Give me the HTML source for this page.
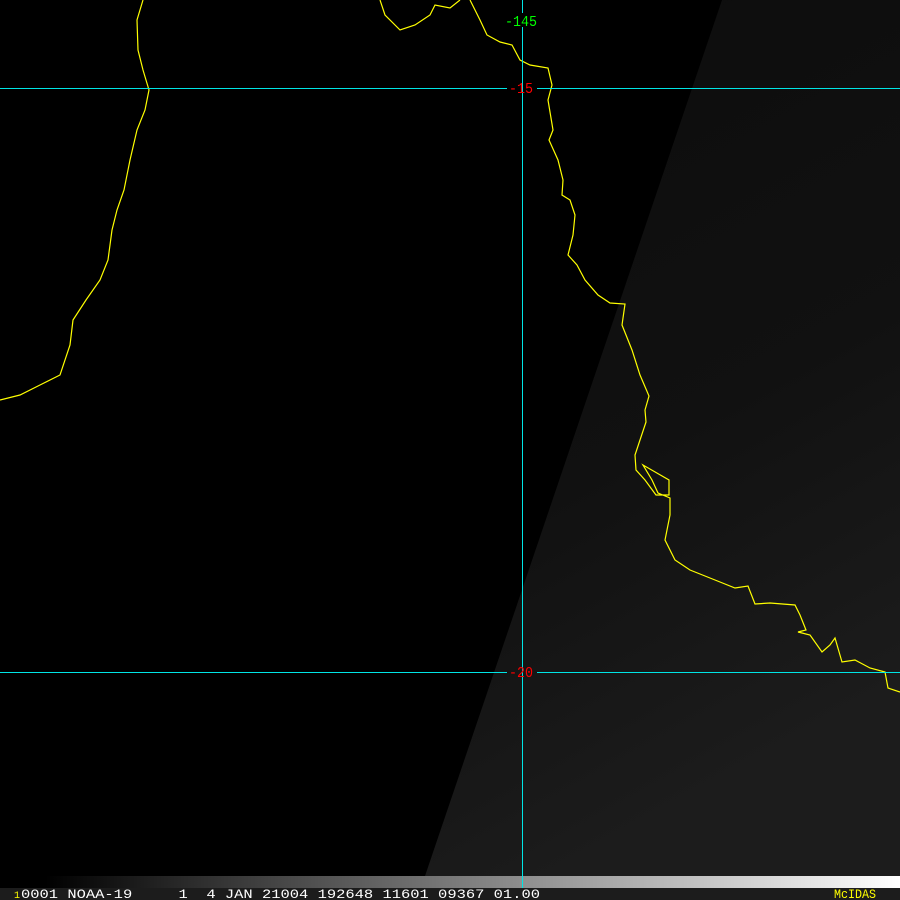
<!DOCTYPE html>
<html><head><style>
html,body{margin:0;padding:0;background:#000;width:900px;height:900px;overflow:hidden}
svg{display:block}
text{white-space:pre}
</style></head><body>
<svg width="900" height="900" viewBox="0 0 900 900" xmlns="http://www.w3.org/2000/svg">
<defs>
<linearGradient id="sw" x1="0" y1="0" x2="0.3" y2="1">
<stop offset="0" stop-color="#0c0c0c"/>
<stop offset="0.6" stop-color="#111"/>
<stop offset="1" stop-color="#1c1c1c"/>
</linearGradient>
<linearGradient id="bar" x1="0" y1="0" x2="1" y2="0">
<stop offset="0" stop-color="#000"/>
<stop offset="0.05" stop-color="#000"/>
<stop offset="1" stop-color="#fff"/>
</linearGradient>
</defs>
<rect width="900" height="900" fill="#000"/>
<polygon points="722,0 900,0 900,876 425,876" fill="url(#sw)"/>
<g fill="none" stroke="#ffff00" stroke-width="1.2">
<polyline points="143,0 137,20 138,50 143,70 149,90 145,110 137,130 130,160 124,190 117,210 112,230 108,260 100,280 86,300 73,320 70,345 60,375 40,385 20,395 0,400"/>
<polyline points="380,0 385,15 400,30 415,25 430,15 435,5 450,8 460,0"/>
<polyline points="470,0 480,20 487,35 500,42 512,45 520,60 530,65 548,68 552,85 548,100 553,130 549,140 558,160 563,180 562,195 570,200 575,215 573,235 568,255 577,265 585,280 598,295 610,303 625,304 622,325 632,350 640,375 649,396 645,410 646,422 640,440 635,455 636,470 645,480 656,495 669,495 669,480 643,465 652,480 658,493 670,498 670,515 665,540 675,560 690,570 710,578 720,582 735,588 748,586 755,604 770,603 795,605 800,615 806,630 798,632 810,635 822,652 830,645 835,638 842,662 855,660 870,668 885,672 888,688 900,692"/>
</g>
<g stroke="#00e5e5" stroke-width="1">
<line x1="0" y1="88.5" x2="507" y2="88.5"/>
<line x1="537" y1="88.5" x2="900" y2="88.5"/>
<line x1="0" y1="672.5" x2="507" y2="672.5"/>
<line x1="537" y1="672.5" x2="900" y2="672.5"/>
<line x1="522.5" y1="0" x2="522.5" y2="876"/>
</g>
<g font-family="Liberation Mono, monospace" font-size="15">
<rect x="504" y="13" width="34" height="14" fill="#000"/>
<text x="505" y="26" fill="#00ff00" textLength="32" lengthAdjust="spacingAndGlyphs">-145</text>
<text x="509" y="93" fill="#ff0000" textLength="24" lengthAdjust="spacingAndGlyphs">-15</text>
<text x="509" y="677" fill="#ff0000" textLength="24" lengthAdjust="spacingAndGlyphs">-20</text>
</g>
<rect x="0" y="876" width="900" height="12" fill="url(#bar)"/>
<line x1="522.5" y1="876" x2="522.5" y2="888" stroke="#00e5e5"/>
<rect x="0" y="888" width="900" height="12" fill="#1c1c1c"/>
<g font-family="Liberation Mono, monospace" font-size="13">
<text x="14" y="898" fill="#ffff00" font-size="10">1</text>
<text x="21" y="898" fill="#fff" xml:space="preserve" textLength="519" lengthAdjust="spacingAndGlyphs">0001 NOAA-19     1  4 JAN 21004 192648 11601 09367 01.00</text>
<text x="834" y="898" fill="#ffff00" textLength="42" lengthAdjust="spacingAndGlyphs">McIDAS</text>
</g>
</svg>
</body></html>
